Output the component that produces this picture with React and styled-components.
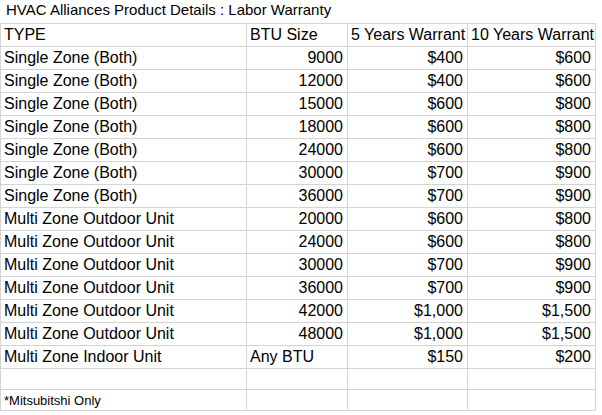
import styled, { createGlobalStyle } from "styled-components";

const GlobalStyle = createGlobalStyle`
  body {
    margin: 0;
    background: #fff;
    font-family: 'Liberation Sans', Arial, sans-serif;
    color: #000;
  }
`

const Page = styled.div`
  width: 602px;
  height: 415px;
  overflow: hidden;
  background: #fff;
`

const Title = styled.div`
  height: 23px;
  padding-left: 6px;
  font-size: 15px;
  line-height: 19px;
  white-space: nowrap;
`

const Grid = styled.div`
  display: grid;
  grid-template-columns: 246px 101px 120px 128px;
  width: 596px;
  border-top: 1px solid #d4d4d4;
  border-left: 1px solid #d4d4d4;
  box-sizing: border-box;
`

const Cell = styled.div`
  box-sizing: border-box;
  height: ${(p) => p.$h || 23}px;
  padding: ${(p) => (p.$note ? "2px 3px 0" : "0 4px 0 3px")};
  border-right: 1px solid #d4d4d4;
  border-bottom: 1px solid #d4d4d4;
  font-size: ${(p) => (p.$note ? 13 : 16)}px;
  line-height: ${(p) => (p.$note ? 18 : 22)}px;
  text-align: ${(p) => (p.$num ? "right" : "left")};
  white-space: nowrap;
  overflow: hidden;
`

const rows = [
  ["Single Zone (Both)", "9000", "$400", "$600"],
  ["Single Zone (Both)", "12000", "$400", "$600"],
  ["Single Zone (Both)", "15000", "$600", "$800"],
  ["Single Zone (Both)", "18000", "$600", "$800"],
  ["Single Zone (Both)", "24000", "$600", "$800"],
  ["Single Zone (Both)", "30000", "$700", "$900"],
  ["Single Zone (Both)", "36000", "$700", "$900"],
  ["Multi Zone Outdoor Unit", "20000", "$600", "$800"],
  ["Multi Zone Outdoor Unit", "24000", "$600", "$800"],
  ["Multi Zone Outdoor Unit", "30000", "$700", "$900"],
  ["Multi Zone Outdoor Unit", "36000", "$700", "$900"],
  ["Multi Zone Outdoor Unit", "42000", "$1,000", "$1,500"],
  ["Multi Zone Outdoor Unit", "48000", "$1,000", "$1,500"],
  ["Multi Zone Indoor Unit", "Any BTU", "$150", "$200"],
]

const isNumber = (v) => /^[\d$,]+$/.test(v)

export default function App() {
  return (
    <Page>
      <GlobalStyle />
      <Title>HVAC Alliances Product Details : Labor Warranty</Title>
      <Grid>
        <Cell>TYPE</Cell>
        <Cell>BTU Size</Cell>
        <Cell>5 Years Warrant</Cell>
        <Cell>10 Years Warrant</Cell>
        {rows.map((row, i) =>
          row.map((value, j) => (
            <Cell key={`${i}-${j}`} $num={j > 0 && isNumber(value)}>
              {value}
            </Cell>
          ))
        )}
        <Cell $h={21} />
        <Cell $h={21} />
        <Cell $h={21} />
        <Cell $h={21} />
        <Cell $h={21} $note>*Mitsubitshi Only</Cell>
        <Cell $h={21} />
        <Cell $h={21} />
        <Cell $h={21} />
      </Grid>
    </Page>
  )
}
